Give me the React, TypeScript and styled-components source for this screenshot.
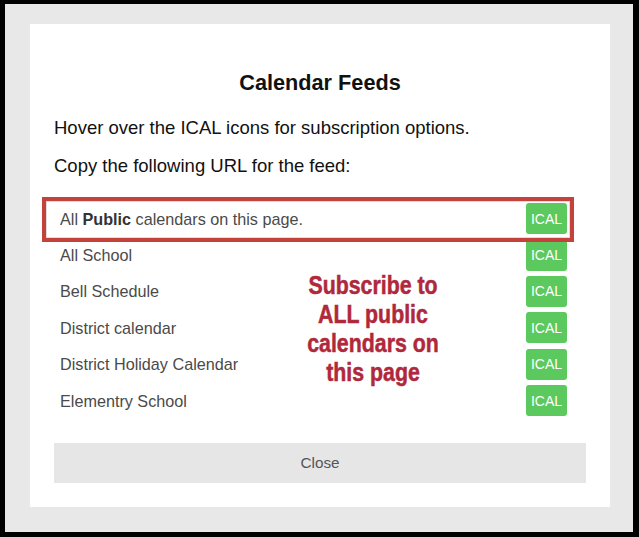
import * as React from 'react'
import styled, { createGlobalStyle } from 'styled-components'

const GlobalStyle = createGlobalStyle`
  html, body {
    margin: 0;
    padding: 0;
    background: #000000;
  }
  body {
    font-family: 'Liberation Sans', Arial, sans-serif;
  }
`

const Frame = styled.div`
  box-sizing: border-box;
  width: 639px;
  height: 537px;
  border-style: solid;
  border-color: #000000;
  border-width: 4px 6px 5px 5px;
  background: #e8e8e8;
  padding: 20px 23px 25px 25px;
`

const Modal = styled.div`
  box-sizing: border-box;
  height: 483px;
  background: #ffffff;
  padding: 46px 24px 24px;
  display: flex;
  flex-direction: column;
`

const Title = styled.h2`
  margin: 0;
  font-size: 21.7px;
  line-height: 26px;
  font-weight: 700;
  text-align: center;
  color: #111111;
`

const Intro = styled.p<{ $gap: number }>`
  margin: ${({ $gap }) => `${$gap}px`} 0 0;
  font-size: 18.5px;
  line-height: 20px;
  color: #111111;
`

const List = styled.ul`
  position: relative;
  list-style: none;
  margin: 24.5px 0 0;
  padding: 0;
  width: 513px;
`

const Row = styled.li`
  height: 36.4px;
  display: flex;
  align-items: center;
  justify-content: space-between;
  padding-left: 6px;
  font-size: 16.2px;
  color: #4a4a4a;

  > span:first-child {
    padding-top: 1px;
  }

  b {
    color: #333333;
  }
`

const IcalButton = styled.span`
  display: flex;
  align-items: center;
  justify-content: center;
  width: 41px;
  height: 31px;
  border-radius: 3px;
  background: #5bc95e;
  color: #ffffff;
  font-size: 14px;
`

const Highlight = styled.div`
  position: absolute;
  left: -12px;
  top: -3.5px;
  width: 532px;
  height: 45px;
  box-sizing: border-box;
  border: 4px solid #c3423b;
  box-shadow: inset 0 0 0 1px #dddddd;
  pointer-events: none;
`

const Note = styled.div`
  position: absolute;
  left: 219px;
  top: 70px;
  width: 200px;
  text-align: center;
  color: #b0283b;
  font-size: 26px;
  line-height: 29px;
  font-weight: 700;
  -webkit-text-stroke: 0.5px #b0283b;

  span {
    display: block;
    transform: scaleX(0.82);
  }
`

const CloseButton = styled.button`
  margin-top: 24px;
  height: 40px;
  border: 0;
  background: #e6e6e6;
  color: #555555;
  font-family: 'Liberation Sans', Arial, sans-serif;
  font-size: 15.3px;
  cursor: pointer;
`

const calendars = [
  'All School',
  'Bell Schedule',
  'District calendar',
  'District Holiday Calendar',
  'Elementry School',
]

const noteLines = ['Subscribe to', 'ALL public', 'calendars on', 'this page']

export default function App() {
  return (
    <>
      <GlobalStyle />
      <Frame>
        <Modal>
          <Title>Calendar Feeds</Title>
          <Intro $gap={22}>Hover over the ICAL icons for subscription options.</Intro>
          <Intro $gap={18}>Copy the following URL for the feed:</Intro>
          <List>
            <Row>
              <span>
                All <b>Public</b> calendars on this page.
              </span>
              <IcalButton>ICAL</IcalButton>
            </Row>
            {calendars.map((name) => (
              <Row key={name}>
                <span>{name}</span>
                <IcalButton>ICAL</IcalButton>
              </Row>
            ))}
            <Highlight />
            <Note>
              {noteLines.map((line) => (
                <span key={line}>{line}</span>
              ))}
            </Note>
          </List>
          <CloseButton>Close</CloseButton>
        </Modal>
      </Frame>
    </>
  )
}
